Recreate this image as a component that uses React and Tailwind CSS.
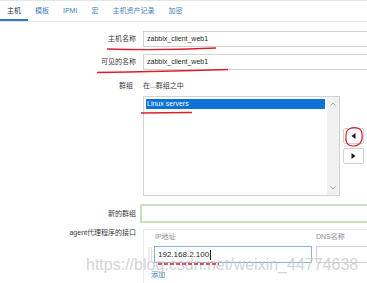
export default function App() {
  const tabs = ["模板", "IPMI", "宏", "主机资产记录", "加密"];
  return (
    <div className="relative w-[367px] h-[283px] overflow-hidden bg-white text-[7px] leading-[10px] text-[#3a3a3a] font-['Liberation_Sans','Noto_Sans_CJK_SC',sans-serif]">
      {/* tabs */}
      <div className="flex h-[22px] border-t border-b border-[#e3e6e8]">
        <div className="px-[7px] flex items-center pt-[1px] border-b-2 border-[#2b7bc4] text-[#2a3440]">主机</div>
        {tabs.map((t) => (
          <div key={t} className="px-[7px] flex items-center text-[#3f80bd]">
            {t}
          </div>
        ))}
      </div>

      {/* host name */}
      <div className="flex items-center mt-[9px]">
        <div className="w-[136px] text-right">主机名称</div>
        <div className="ml-[7px] flex-1 mr-[-6px] h-[16px] border border-[#cfd3d6] px-[3px] flex items-center text-[#1f1f1f]">
          zabbix_client_web1
        </div>
      </div>

      {/* visible name */}
      <div className="flex items-center mt-[7px]">
        <div className="w-[136px] text-right">可见的名称</div>
        <div className="ml-[7px] flex-1 mr-[-6px] h-[16px] border border-[#cfd3d6] px-[3px] flex items-center text-[#1f1f1f]">
          zabbix_client_web1
        </div>
      </div>

      {/* groups header */}
      <div className="flex mt-[11px] h-[10px]">
        <div className="w-[136px] text-right pr-[3px]">群组</div>
        <div className="ml-[7px]">在...群组之中</div>
      </div>

      {/* group list */}
      <div className="flex mt-[5px]">
        <div className="w-[136px]" />
        <div className="ml-[7px] w-[197px] h-[100px] border border-[#cfd3d6] flex">
          <div className="flex-1 p-[2px]">
            <div className="h-[10px] bg-[#0b72d6] text-white pl-[1px] flex items-center">Linux servers</div>
          </div>
          <div className="w-[12px] bg-[#f0f0f0] flex flex-col items-center justify-between py-[5px]">
            <svg width="6" height="4" viewBox="0 0 6 4">
              <path d="M0.5 3.5 L3 1 L5.5 3.5" fill="none" stroke="#9c9c9c" strokeWidth="0.9" />
            </svg>
            <svg width="6" height="4" viewBox="0 0 6 4">
              <path d="M0.5 0.5 L3 3 L5.5 0.5" fill="none" stroke="#9c9c9c" strokeWidth="0.9" />
            </svg>
          </div>
        </div>
        <div className="ml-[3px] mt-[32px] flex flex-col gap-[4px]">
          <div className="w-[21px] h-[16px] border border-[#cfd3d6] rounded-[2px] bg-white flex items-center justify-center">
            <svg width="5" height="6" viewBox="0 0 5 6">
              <path d="M4.5 0 L4.5 6 L0.5 3 Z" fill="#1a1a1a" />
            </svg>
          </div>
          <div className="w-[21px] h-[16px] border border-[#cfd3d6] rounded-[2px] bg-white flex items-center justify-center">
            <svg width="5" height="6" viewBox="0 0 5 6">
              <path d="M0.5 0 L0.5 6 L4.5 3 Z" fill="#1a1a1a" />
            </svg>
          </div>
        </div>
      </div>

      {/* new group */}
      <div className="flex items-center mt-[8px]">
        <div className="w-[136px] text-right">新的群组</div>
        <div className="ml-[4px] flex-1 mr-[-6px] h-[19px] border-2 border-[#c6e2c0] bg-white" />
      </div>

      {/* agent interface */}
      <div className="flex items-start mt-[5px]">
        <div className="w-[136px] text-right h-[10px]">agent代理程序的接口</div>
        <div className="ml-[7px] mt-[1px] flex-1 mr-[-6px] h-[60px] border border-[#e8eaeb] pl-[4px]">
          <div className="flex mt-[2px] h-[10px] text-[#8a8f94]">
            <div className="w-[6px]" />
            <div className="w-[158px] pl-[1px]">IP地址</div>
            <div className="ml-[4px]">DNS名称</div>
          </div>
          <div className="flex mt-[4px] h-[17px]">
            <div className="w-[6px] flex items-center">
              <svg width="5" height="15" viewBox="0 0 5 15">
                {[0, 1, 2, 3, 4, 5, 6].map((i) => (
                  <g key={i}>
                    <rect x="0.5" y={0.5 + i * 2} width="1" height="1" fill="#b8bcbf" />
                    <rect x="3" y={0.5 + i * 2} width="1" height="1" fill="#b8bcbf" />
                  </g>
                ))}
              </svg>
            </div>
            <div className="w-[158px] h-[17px] border border-[#8cb3d4] px-[3px] flex items-center text-[8px] text-[#1f1f1f]">
              192.168.2.100
              <span className="inline-block w-[1px] h-[10px] bg-[#1f1f1f] ml-[1px]" />
            </div>
            <div className="ml-[4px] flex-1 h-[17px] border border-[#cfd3d6]" />
          </div>
          <div className="mt-[7px] pl-[3px] text-[#3f80bd] h-[10px]">添加</div>
        </div>
      </div>

      {/* watermark */}
      <div className="absolute left-[86px] top-[257px] text-[16px] leading-[16px] text-[#c8c8c8]/80 whitespace-nowrap pointer-events-none">
        https://blog.csdn.net/weixin_44774638
      </div>

      {/* red annotations */}
      <svg className="absolute left-0 top-0 pointer-events-none" width="367" height="283" viewBox="0 0 367 283">
        <path d="M107 49 Q160 50.5 216 48" fill="none" stroke="#d8202a" strokeWidth="1.3" />
        <path d="M97 72.5 Q160 71.5 228 69.5" fill="none" stroke="#d8202a" strokeWidth="1.3" />
        <path d="M141 113 L192 112.5" fill="none" stroke="#d8202a" strokeWidth="1.3" />
        <path
          d="M349 129 C355 126 362 128 362 134 C363 141 360 146 353 146 C347 146 345 141 346 135 C346 131 348 129 351 128"
          fill="none"
          stroke="#d8202a"
          strokeWidth="1.2"
        />
        <path d="M158 264 L219 264" fill="none" stroke="#d8202a" strokeWidth="1.5" strokeDasharray="4 2" />
      </svg>
    </div>
  );
}
